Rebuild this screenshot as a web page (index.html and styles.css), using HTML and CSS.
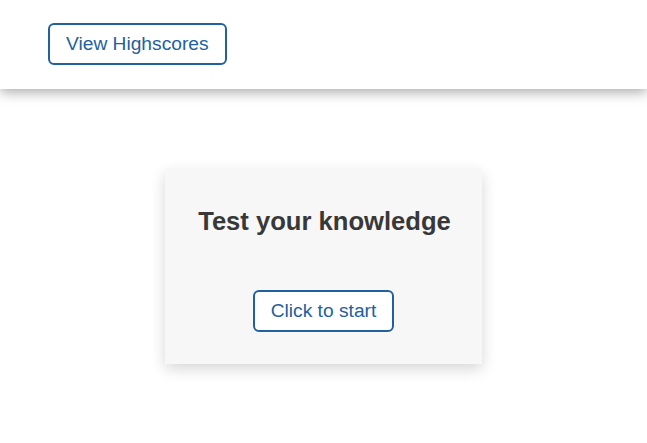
FILE: index.html
```html
<!DOCTYPE html>
<html lang="en">
<head>
<meta charset="utf-8">
<title>Quiz</title>
<link rel="stylesheet" href="styles.css">
</head>
<body>
<header class="topbar">
  <button class="btn">View Highscores</button>
</header>
<main class="main">
  <section class="card">
    <h1 class="card-title">Test your knowledge</h1>
    <button class="btn">Click to start</button>
  </section>
</main>
</body>
</html>
```

FILE: styles.css
```css
* { box-sizing: border-box; }
html, body { margin: 0; padding: 0; background: #fff; }
body { font-family: "Liberation Sans", Arial, sans-serif; color: #333; min-height: 443px; }
.topbar {
  height: 89px;
  display: flex;
  align-items: flex-start;
  padding: 23px 48px 0;
  background: #fff;
  box-shadow: 0 3px 12px rgba(0,0,0,0.35);
  position: relative;
}
.btn {
  font-family: "Liberation Sans", Arial, sans-serif;
  font-size: 19.2px;
  line-height: 22px;
  color: #22619f;
  background: #fff;
  border: 2px solid #22619f;
  border-radius: 6px;
  padding: 8px 16px;
  cursor: pointer;
}
.main {
  display: flex;
  justify-content: center;
  padding: 80px 0 60px;
}
.card {
  width: 317px;
  background: #f7f7f7;
  box-shadow: 0 5px 14px rgba(0,0,0,0.16);
  display: flex;
  flex-direction: column;
  align-items: center;
  padding: 37px 16px 32px;
}
.card-title {
  margin: 0 0 54px;
  padding-left: 2px;
  font-size: 25.6px;
  line-height: 30px;
  font-weight: bold;
  color: #383838;
}
```
